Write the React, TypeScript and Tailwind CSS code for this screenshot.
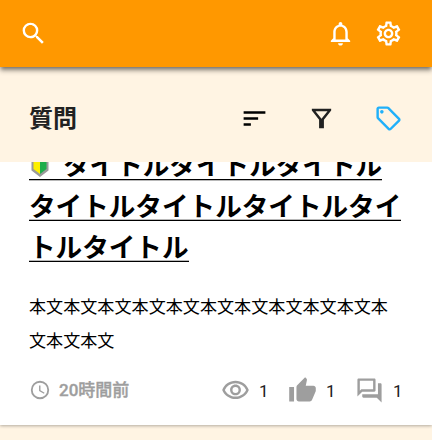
import React from "react";
import {
  MdSearch,
  MdOutlineNotifications,
  MdOutlineSettings,
  MdSort,
  MdOutlineLocalOffer,
  MdOutlineVisibility,
  MdThumbUp,
  MdOutlineQuestionAnswer,
} from "react-icons/md";

function FilterIcon() {
  return (
    <svg viewBox="0 0 24 24" className="size-[29px]" fill="currentColor">
      <path d="M4 4h16v1.4L14 13v7h-4v-7L4 5.4V4zm3 2l5 6.3L17 6H7z" fillRule="evenodd" />
    </svg>
  );
}

function ClockIcon() {
  return (
    <svg viewBox="0 0 24 24" className="-mt-[2px] size-[22px]" fill="currentColor">
      <path d="M12 20a8 8 0 0 0 8-8 8 8 0 0 0-8-8 8 8 0 0 0-8 8 8 8 0 0 0 8 8m0-18a10 10 0 0 1 10 10 10 10 0 0 1-10 10A10 10 0 0 1 2 12 10 10 0 0 1 12 2m.5 5v5.25l4.5 2.67-.75 1.23L11 13V7h1.5z" />
    </svg>
  );
}

function BeginnerMark() {
  return (
    <svg viewBox="0 0 20 27" className="mt-[11px] ml-px h-[27px] w-5">
      <path d="M1.5 1l2-1L10 6l6.500-6 2 1v19.500L10 27l-8.500-6.500z" fill="#9a9a9a" />
      <path d="M3.500 2l6.500 7v15l-6.500-5z" fill="#fdf000" />
      <path d="M16.500 2L10 9v15l6.500-5z" fill="#1fae4b" />
    </svg>
  );
}

function Stat({ icon, count }: { icon: React.ReactNode; count: number }) {
  return (
    <div className="flex items-center gap-[9px]">
      {icon}
      <span className="w-[10px] text-[17px] leading-6 text-[#212121]">{count}</span>
    </div>
  );
}

export default function App() {
  return (
    <div className="flex h-[440px] w-[432px] flex-col overflow-hidden bg-[#fff4e3] font-[Roboto,'Noto_Sans_CJK_JP',sans-serif] text-black">
      <header className="z-10 flex h-[67px] shrink-0 items-center bg-[#ff9800] pr-[29px] pl-[19px] text-white shadow-[0_3px_4px_-1px_rgba(0,0,0,0.4),0_4px_5px_rgba(0,0,0,0.24)]">
        <MdSearch className="size-[29px]" />
        <MdOutlineNotifications className="ml-auto size-[29px]" />
        <MdOutlineSettings className="ml-[19px] size-[29px]" />
      </header>

      <div className="z-[1] flex h-[95px] shrink-0 items-center bg-[#fff4e3] pt-2 pr-[29px] pl-[29px] text-[#212121]">
        <h1 className="text-[24px] leading-9 font-bold">質問</h1>
        <MdSort className="ml-auto size-[29px] text-black" />
        <div className="ml-[38px]">
          <FilterIcon />
        </div>
        <MdOutlineLocalOffer className="ml-[38px] size-[29px] text-[#20b0fa]" />
      </div>

      <article className="flex h-[263px] shrink-0 flex-col overflow-hidden bg-white px-[29px] shadow-[0_1px_3px_rgba(0,0,0,0.3)]">
        <h2 className="-mt-[23px] flex shrink-0 flex-col items-start text-[26.6px] leading-[53px] font-bold whitespace-nowrap">
          <span className="flex h-[41px] border-b border-black shadow-[0_1px_0_#b8b8b8]">
            <BeginnerMark />
            <span className="ml-[13px]">タイトルタイトルタイトル</span>
          </span>
          <span className="h-[41px] border-b border-black shadow-[inset_0_-1px_0_#b8b8b8]">タイトルタイトルタイトルタイ</span>
          <span className="h-[41px] border-b border-black shadow-[inset_0_-1px_0_#b8b8b8]">トルタイトル</span>
        </h2>
        <p className="mt-[29px] shrink-0 text-[17.1px] leading-[33.5px] whitespace-nowrap">
          本文本文本文本文本文本文本文本文本文本文本
          <br />
          文本文本文
        </p>
        <footer className="mt-[18px] flex h-[29px] shrink-0 items-center text-[#9e9e9e]">
          <ClockIcon />
          <span className="-mt-px ml-2 text-[17px] leading-6 font-medium [-webkit-text-stroke:0.35px_#9e9e9e]">20時間前</span>
          <div className="ml-auto flex gap-[19px]">
            <Stat icon={<MdOutlineVisibility className="size-[29px]" />} count={1} />
            <Stat icon={<MdThumbUp className="size-[29px]" />} count={1} />
            <Stat icon={<MdOutlineQuestionAnswer className="size-[29px]" />} count={1} />
          </div>
        </footer>
      </article>
    </div>
  );
}
